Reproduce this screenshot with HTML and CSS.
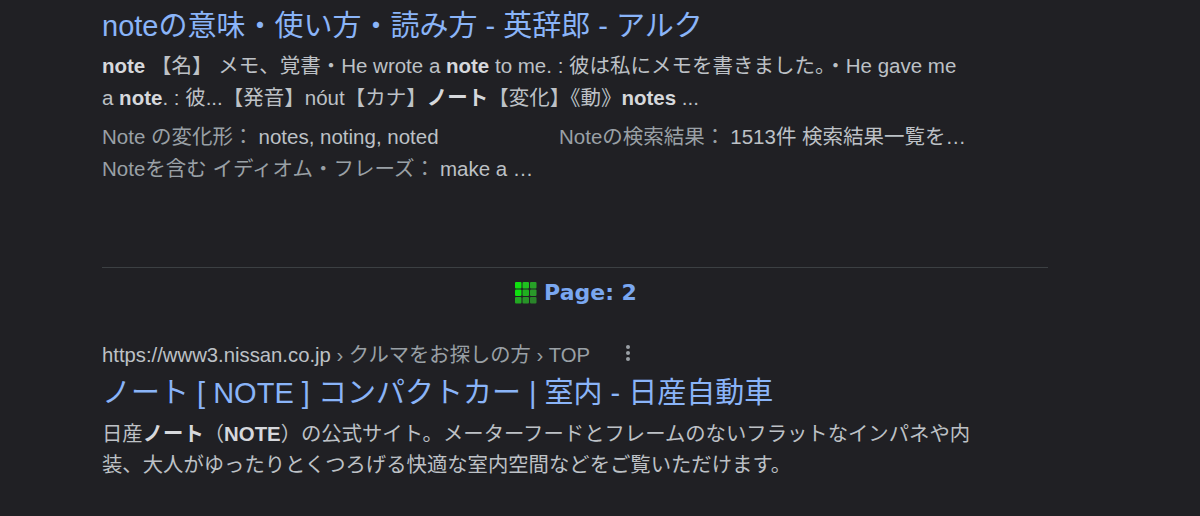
FILE: index.html
```html
<!DOCTYPE html>
<html lang="ja">
<head>
  <meta charset="UTF-8" />
  <title>note - 検索結果</title>
  <link rel="stylesheet" href="styles.css">
</head>
<body>
  <main class="results">
    <section class="result first">
      <h3 class="title">noteの意味・使い方・読み方 - 英辞郎 - アルク</h3>
      <p class="snippet"><b>note</b> 【名】 メモ、覚書・He wrote a <b>note</b> to me. : 彼は私にメモを書きました。・He gave me<br>a <b>note</b>. : 彼...【発音】nóut【カナ】<b>ノート</b>【変化】《動》<b>notes</b> ...</p>
      <div class="facts">
        <div class="fact"><span class="key">Note の変化形：</span><span class="val">notes, noting, noted</span></div>
        <div class="fact"><span class="key">Noteの検索結果：</span><span class="val">1513件 検索結果一覧を…</span></div>
        <div class="fact"><span class="key">Noteを含む イディオム・フレーズ：</span><span class="val">make a …</span></div>
      </div>
    </section>

    <div class="page-sep">
      <svg class="grid-icon" width="22" height="22" viewBox="0 0 22 22">
        <rect x="0" y="0" width="6.5" height="6.5" rx="1" fill="#0fe00f"/>
        <rect x="7.5" y="0" width="6.5" height="6.5" rx="1" fill="#1fc01f"/>
        <rect x="15" y="0" width="6.5" height="6.5" rx="1" fill="#27a027"/>
        <rect x="0" y="7.5" width="6.5" height="6.5" rx="1" fill="#0fe00f"/>
        <rect x="7.5" y="7.5" width="6.5" height="6.5" rx="1" fill="#1fb01f"/>
        <rect x="15" y="7.5" width="6.5" height="6.5" rx="1" fill="#2a9a2a"/>
        <rect x="0" y="15" width="6.5" height="6.5" rx="1" fill="#22a822"/>
        <rect x="7.5" y="15" width="6.5" height="6.5" rx="1" fill="#289528"/>
        <rect x="15" y="15" width="6.5" height="6.5" rx="1" fill="#2a852a"/>
      </svg>
      <span class="page-label">Page: 2</span>
    </div>

    <section class="result">
      <div class="cite">
        <span class="url">https://www3.nissan.co.jp<span class="crumb"> › クルマをお探しの方 › TOP</span></span>
        <svg class="more" width="6" height="18" viewBox="0 0 6 18"><circle cx="3" cy="3" r="2"/><circle cx="3" cy="9" r="2"/><circle cx="3" cy="15" r="2"/></svg>
      </div>
      <h3 class="title">ノート [ NOTE ] コンパクトカー | 室内 - 日産自動車</h3>
      <p class="snippet tight">日産<b>ノート</b>（<b>NOTE</b>）の公式サイト。メーターフードとフレームのないフラットなインパネや内<br>装、大人がゆったりとくつろげる快適な室内空間などをご覧いただけます。</p>
    </section>
  </main>
</body>
</html>
```

FILE: styles.css
```css
html, body {
  margin: 0;
  padding: 0;
}

body {
  height: 516px;
  overflow: hidden;
  background-color: #202024;
  color: #bdc1c6;
  font-family: 'Liberation Sans', 'Noto Sans CJK JP', sans-serif;
}

.results {
  width: 946px;
  margin-left: 102px;
  padding-top: 7px;
}

.title {
  margin: 0;
  font-size: 29px;
  font-weight: 400;
  line-height: 38px;
  color: #8ab4f8;
  white-space: nowrap;
}

.snippet {
  margin: 5px 0 0;
  font-size: 20.5px;
  line-height: 32px;
  white-space: nowrap;
}

.snippet.tight {
  margin-top: 7px;
  font-size: 20.35px;
  line-height: 31px;
}

.snippet b {
  color: #d6d8dc;
}

.facts {
  display: grid;
  grid-template-columns: 457px 1fr;
  margin-top: 7px;
  font-size: 20.5px;
  line-height: 32px;
}

.key {
  color: #9aa0a6;
  margin-right: 5px;
}

.val {
  color: #bdc1c6;
}

.first {
  height: 260px;
}

.page-sep {
  border-top: 1px solid #3c4043;
  height: 71px;
  display: flex;
  align-items: flex-start;
  justify-content: center;
  gap: 7px;
  padding: 13px 0 0 2px;
  box-sizing: border-box;
}

.grid-icon {
  margin-top: 1px;
}

.page-label {
  font-family: 'DejaVu Sans', sans-serif;
  font-size: 22px;
  font-weight: 700;
  line-height: 24px;
  color: #7aa7f0;
}

.cite {
  display: flex;
  align-items: center;
  gap: 35px;
  height: 29px;
  font-size: 20.3px;
}

.url {
  color: #bdc1c6;
  white-space: nowrap;
}

.crumb {
  color: #9aa0a6;
}

.more {
  fill: #9aa0a6;
}

.cite + .title {
  margin-top: 7px;
}
```
